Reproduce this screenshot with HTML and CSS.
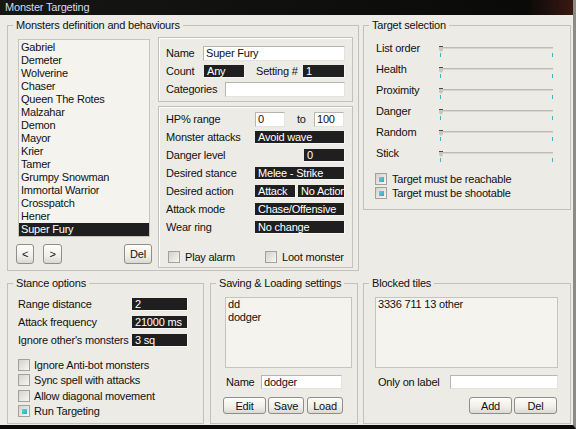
FILE: index.html
```html
<!DOCTYPE html>
<html lang="en">
  <head>
    <meta charset="UTF-8" />
    <title>Monster Targeting</title>
    <link rel="stylesheet" href="styles.css">
  </head>
  <body>
    <div class="window">
      <div class="titlebar">Monster Targeting</div>

      <div class="client">
        <div class="row top-row">
          <!-- Monsters definition -->
          <fieldset class="group group-monsters">
            <legend>Monsters definition and behaviours</legend>
            <div class="monsters-body">
              <div class="list-col">
                <ul class="listbox monster-list">
                  <li>Gabriel</li>
                  <li>Demeter</li>
                  <li>Wolverine</li>
                  <li>Chaser</li>
                  <li>Queen The Rotes</li>
                  <li>Malzahar</li>
                  <li>Demon</li>
                  <li>Mayor</li>
                  <li>Krier</li>
                  <li>Tamer</li>
                  <li>Grumpy Snowman</li>
                  <li>Immortal Warrior</li>
                  <li>Crosspatch</li>
                  <li>Hener</li>
                  <li class="selected">Super Fury</li>
                </ul>
                <div class="list-buttons">
                  <button class="btn btn-prev">&lt;</button>
                  <button class="btn btn-next">&gt;</button>
                  <button class="btn btn-del">Del</button>
                </div>
              </div>

              <div class="detail-col">
                <div class="panel panel-ident">
                  <div class="frow">
                    <span class="lbl lbl-name">Name</span>
                    <span class="edit grow">Super Fury</span>
                  </div>
                  <div class="frow">
                    <span class="lbl lbl-count">Count</span>
                    <span class="dark w41">Any</span>
                    <span class="lbl lbl-setting">Setting #</span>
                    <span class="dark grow">1</span>
                  </div>
                  <div class="frow">
                    <span class="lbl lbl-cat">Categories</span>
                    <span class="edit grow"></span>
                  </div>
                </div>

                <div class="panel panel-behav">
                  <div class="frow">
                    <span class="lbl lbl-wide">HP% range</span>
                    <span class="edit w30">0</span>
                    <span class="lbl lbl-to">to</span>
                    <span class="edit w30">100</span>
                  </div>
                  <div class="frow">
                    <span class="lbl lbl-wide">Monster attacks</span>
                    <span class="dark grow">Avoid wave</span>
                  </div>
                  <div class="frow">
                    <span class="lbl lbl-wide">Danger level</span>
                    <span class="dark w41 push">0</span>
                  </div>
                  <div class="frow">
                    <span class="lbl lbl-wide">Desired stance</span>
                    <span class="dark grow">Melee - Strike</span>
                  </div>
                  <div class="frow">
                    <span class="lbl lbl-wide">Desired action</span>
                    <span class="dark w41">Attack</span>
                    <span class="dark grow gap2">No Action</span>
                  </div>
                  <div class="frow">
                    <span class="lbl lbl-wide">Attack mode</span>
                    <span class="dark grow">Chase/Offensive</span>
                  </div>
                  <div class="frow">
                    <span class="lbl lbl-wide">Wear ring</span>
                    <span class="dark grow">No change</span>
                  </div>
                  <div class="frow check-pair">
                    <label class="check check-alarm"><span class="box"></span>Play alarm</label>
                    <label class="check"><span class="box"></span>Loot monster</label>
                  </div>
                </div>
              </div>
            </div>
          </fieldset>

          <!-- Target selection -->
          <fieldset class="group group-target">
            <legend>Target selection</legend>
            <div class="target-body">
              <div class="slider-row">
                <span class="slider-label">List order</span>
                <svg class="slider" width="116" height="21" viewBox="0 0 116 21">
                  <rect x="3" y="9" width="111" height="1" fill="#bdbcb4"/>
                  <rect x="3" y="10" width="111" height="1" fill="#d8d7cf"/>
                  <rect x="0" y="8" width="4" height="1" fill="#4a4a48"/>
                  <path d="M0 9h4v3l-2 2l-2-2z" fill="#c9c8c0"/>
                  <rect x="1" y="15" width="1" height="4" fill="#36b9c6"/>
                  <rect x="113" y="15" width="1" height="4" fill="#36b9c6"/>
                </svg>
              </div>
              <div class="slider-row">
                <span class="slider-label">Health</span>
                <svg class="slider" width="116" height="21" viewBox="0 0 116 21">
                  <rect x="3" y="9" width="111" height="1" fill="#bdbcb4"/>
                  <rect x="3" y="10" width="111" height="1" fill="#d8d7cf"/>
                  <rect x="0" y="8" width="4" height="1" fill="#4a4a48"/>
                  <path d="M0 9h4v3l-2 2l-2-2z" fill="#c9c8c0"/>
                  <rect x="1" y="15" width="1" height="4" fill="#36b9c6"/>
                  <rect x="113" y="15" width="1" height="4" fill="#36b9c6"/>
                </svg>
              </div>
              <div class="slider-row">
                <span class="slider-label">Proximity</span>
                <svg class="slider" width="116" height="21" viewBox="0 0 116 21">
                  <rect x="3" y="9" width="111" height="1" fill="#bdbcb4"/>
                  <rect x="3" y="10" width="111" height="1" fill="#d8d7cf"/>
                  <rect x="0" y="8" width="4" height="1" fill="#4a4a48"/>
                  <path d="M0 9h4v3l-2 2l-2-2z" fill="#c9c8c0"/>
                  <rect x="1" y="15" width="1" height="4" fill="#36b9c6"/>
                  <rect x="113" y="15" width="1" height="4" fill="#36b9c6"/>
                </svg>
              </div>
              <div class="slider-row">
                <span class="slider-label">Danger</span>
                <svg class="slider" width="116" height="21" viewBox="0 0 116 21">
                  <rect x="3" y="9" width="111" height="1" fill="#bdbcb4"/>
                  <rect x="3" y="10" width="111" height="1" fill="#d8d7cf"/>
                  <rect x="0" y="8" width="4" height="1" fill="#4a4a48"/>
                  <path d="M0 9h4v3l-2 2l-2-2z" fill="#c9c8c0"/>
                  <rect x="1" y="15" width="1" height="4" fill="#36b9c6"/>
                  <rect x="113" y="15" width="1" height="4" fill="#36b9c6"/>
                </svg>
              </div>
              <div class="slider-row">
                <span class="slider-label">Random</span>
                <svg class="slider" width="116" height="21" viewBox="0 0 116 21">
                  <rect x="3" y="9" width="111" height="1" fill="#bdbcb4"/>
                  <rect x="3" y="10" width="111" height="1" fill="#d8d7cf"/>
                  <rect x="0" y="8" width="4" height="1" fill="#4a4a48"/>
                  <path d="M0 9h4v3l-2 2l-2-2z" fill="#c9c8c0"/>
                  <rect x="1" y="15" width="1" height="4" fill="#36b9c6"/>
                  <rect x="113" y="15" width="1" height="4" fill="#36b9c6"/>
                </svg>
              </div>
              <div class="slider-row">
                <span class="slider-label">Stick</span>
                <svg class="slider" width="116" height="21" viewBox="0 0 116 21">
                  <rect x="3" y="9" width="111" height="1" fill="#bdbcb4"/>
                  <rect x="3" y="10" width="111" height="1" fill="#d8d7cf"/>
                  <rect x="0" y="8" width="4" height="1" fill="#4a4a48"/>
                  <path d="M0 9h4v3l-2 2l-2-2z" fill="#c9c8c0"/>
                  <rect x="1" y="15" width="1" height="4" fill="#36b9c6"/>
                  <rect x="113" y="15" width="1" height="4" fill="#36b9c6"/>
                </svg>
              </div>
              <div class="target-checks">
                <label class="check"><span class="box checked"></span>Target must be reachable</label>
                <label class="check"><span class="box checked"></span>Target must be shootable</label>
              </div>
            </div>
          </fieldset>
        </div>

        <div class="row bottom-row">
          <!-- Stance options -->
          <fieldset class="group group-stance">
            <legend>Stance options</legend>
            <div class="stance-body">
              <div class="frow">
                <span class="lbl lbl-stance">Range distance</span>
                <span class="dark w56">2</span>
              </div>
              <div class="frow">
                <span class="lbl lbl-stance">Attack frequency</span>
                <span class="dark w56">21000 ms</span>
              </div>
              <div class="frow">
                <span class="lbl lbl-stance">Ignore other's monsters</span>
                <span class="dark w56">3 sq</span>
              </div>
              <div class="stance-checks">
                <label class="check"><span class="box"></span>Ignore Anti-bot monsters</label>
                <label class="check"><span class="box"></span>Sync spell with attacks</label>
                <label class="check"><span class="box"></span>Allow diagonal movement</label>
                <label class="check"><span class="box checked"></span>Run Targeting</label>
              </div>
            </div>
          </fieldset>

          <!-- Saving & Loading -->
          <fieldset class="group group-save">
            <legend>Saving &amp; Loading settings</legend>
            <div class="save-body">
              <ul class="listbox save-list">
                <li>dd</li>
                <li>dodger</li>
              </ul>
              <div class="frow name-row">
                <span class="lbl lbl-savename">Name</span>
                <span class="edit w81">dodger</span>
              </div>
              <div class="btn-row">
                <button class="btn btn-edit">Edit</button>
                <button class="btn btn-save">Save</button>
                <button class="btn btn-load">Load</button>
              </div>
            </div>
          </fieldset>

          <!-- Blocked tiles -->
          <fieldset class="group group-blocked">
            <legend>Blocked tiles</legend>
            <div class="blocked-body">
              <ul class="listbox blocked-list">
                <li>3336 711 13 other</li>
              </ul>
              <div class="frow name-row">
                <span class="lbl lbl-only">Only on label</span>
                <span class="edit w108"></span>
              </div>
              <div class="btn-row btn-row-right">
                <button class="btn btn-add">Add</button>
                <button class="btn btn-del2">Del</button>
              </div>
            </div>
          </fieldset>
        </div>
      </div>
    </div>
  </body>
</html>
```

FILE: styles.css
```css
* {
  box-sizing: border-box;
}
body {
  margin: 0;
  background: #000;
  font-family: "Liberation Sans", Arial, sans-serif;
  font-size: 11px;
  letter-spacing: -0.2px;
  color: #111;
}
.window {
  width: 576px;
  height: 429px;
  background: #ecebe5;
  border-right: 3px solid #8c8b86;
  border-bottom: 4px solid #0b0b0b;
}
.titlebar {
  height: 15px;
  line-height: 15px;
  padding-left: 5px;
  color: #cedcec;
  background: linear-gradient(to right, #161615, #0a0a09 92%, #3a1812);
}
.client {
  padding: 4px 0 0 7px;
}
.row {
  display: flex;
  align-items: flex-start;
}
.top-row {
  gap: 4px;
}
.bottom-row {
  margin-top: 6px;
}

/* group boxes */
.group {
  margin: 0;
  padding: 0;
  min-width: 0;
  border: 1px solid #c3c2ba;
}
.group legend {
  margin-left: 5px;
  padding: 0 3px;
  line-height: 13px;
}
.group-monsters {
  width: 352px;
  height: 252px;
}
.group-target {
  width: 208px;
  height: 191px;
}
.group-stance {
  width: 197px;
  height: 147px;
}
.group-save {
  width: 148px;
  height: 147px;
  margin-left: 6px;
}
.group-blocked {
  width: 208px;
  height: 147px;
  margin-left: 5px;
}

/* list boxes */
.listbox {
  margin: 0;
  padding: 0;
  list-style: none;
  background: #f4f3ee;
  border: 1px solid #c6c5bd;
  overflow: hidden;
}
.listbox li {
  height: 13px;
  line-height: 13px;
  padding-left: 2px;
  white-space: nowrap;
}
.listbox li.selected {
  background: #1f1f1f;
  color: #fff;
}

/* buttons */
.btn {
  padding: 0;
  font-family: inherit;
  font-size: 11px;
  letter-spacing: inherit;
  color: #111;
  border: 1px solid #8f8e88;
  border-radius: 3px;
  background: linear-gradient(#fdfdfb, #f0efea 60%, #d9d8d1);
}

/* monsters group */
.monsters-body {
  display: flex;
  gap: 6px;
  padding: 5px 5px 0 8px;
}
.list-col {
  width: 136px;
}
.monster-list {
  margin: 2px 2px 0;
  height: 198px;
  padding-top: 1px;
}
.list-buttons {
  display: flex;
  height: 20px;
  margin-top: 7px;
}
.btn-prev {
  width: 18px;
}
.btn-next {
  width: 19px;
  margin-left: 9px;
}
.btn-del {
  width: 28px;
  margin-left: auto;
}
.detail-col {
  width: 195px;
}
.panel {
  border: 1px solid #c3c2ba;
  box-shadow: inset 1px 1px 0 #fff;
}
.panel-ident {
  height: 65px;
  padding: 6px 7px 0;
}
.panel-behav {
  height: 162px;
  margin-top: 4px;
  padding: 3px 7px 0;
}
.frow {
  display: flex;
  align-items: center;
  height: 18px;
  white-space: nowrap;
}
.lbl {
  flex: none;
}
.lbl-name {
  width: 37px;
}
.lbl-count {
  width: 38px;
}
.lbl-setting {
  width: 47px;
  margin-left: 11px;
}
.lbl-cat {
  width: 59px;
}
.lbl-wide {
  width: 89px;
}
.lbl-to {
  width: 17px;
  margin-left: 12px;
}

/* fields */
.edit {
  height: 15px;
  line-height: 13px;
  padding-left: 2px;
  background: #fff;
  border: 1px solid;
  border-color: #b7b6ae #e4e3dc #e4e3dc #b7b6ae;
  overflow: hidden;
}
.dark {
  height: 13px;
  line-height: 12px;
  padding-left: 3px;
  background: #1f1f1f;
  color: #fff;
  border-right: 1px solid #f6f6f3;
  border-bottom: 1px solid #f6f6f3;
  overflow: hidden;
  white-space: nowrap;
}
.grow {
  flex: 1;
  min-width: 0;
}
.push {
  margin-left: auto;
}
.gap2 {
  margin-left: 2px;
}
.w30 {
  width: 30px;
}
.w41 {
  width: 41px;
  flex: none;
}
.w56 {
  width: 56px;
}
.w81 {
  width: 81px;
  height: 14px;
}
.w108 {
  width: 108px;
  height: 14px;
}

/* check boxes */
.check {
  display: flex;
  align-items: center;
  white-space: nowrap;
}
.box {
  display: flex;
  align-items: center;
  justify-content: center;
  flex: none;
  width: 12px;
  height: 12px;
  margin-right: 5px;
  border: 1px solid #a2a19a;
  background: linear-gradient(135deg, #d3d2ca, #f7f7f4);
}
.box.checked::after {
  content: "";
  width: 5px;
  height: 5px;
  background: linear-gradient(135deg, #5fd3dc, #27aebb);
}
.check-pair {
  margin-top: 12px;
}
.check-alarm {
  width: 97px;
  margin-left: 2px;
}

/* target selection */
.target-body {
  padding: 6px 0 0 12px;
}
.slider-row {
  display: flex;
  height: 21px;
}
.slider-label {
  width: 63px;
  line-height: 21px;
}
.slider {
  display: block;
}
.target-checks {
  margin-top: 8px;
  margin-left: -1px;
}
.target-checks .check {
  height: 14px;
}

/* stance */
.stance-body {
  padding: 5px 0 0 10px;
}
.lbl-stance {
  width: 114px;
}
.stance-checks {
  margin-top: 8px;
}
.stance-checks .check {
  height: 15.5px;
}
.stance-checks .box {
  margin-right: 4px;
}

/* saving & loading */
.save-body {
  padding: 7px 0 0 12px;
}
.save-list {
  width: 127px;
  height: 71px;
  margin-left: 2px;
}
.name-row {
  margin-top: 5px;
}
.lbl-savename {
  width: 35px;
  margin-left: 3px;
}
.btn-row {
  display: flex;
  height: 17px;
  margin-top: 6px;
}
.btn-edit {
  width: 43px;
}
.btn-save {
  width: 36px;
  margin-left: 2px;
}
.btn-load {
  width: 36px;
  margin-left: 3px;
}

/* blocked tiles */
.blocked-body {
  padding: 7px 0 0 11px;
}
.blocked-list {
  width: 183px;
  height: 71px;
}
.lbl-only {
  width: 72px;
  margin-left: 3px;
}
.btn-row-right {
  width: 183px;
  justify-content: flex-end;
  padding-right: 1px;
}
.btn-add {
  width: 43px;
}
.btn-del2 {
  width: 43px;
  margin-left: 2px;
}
```
